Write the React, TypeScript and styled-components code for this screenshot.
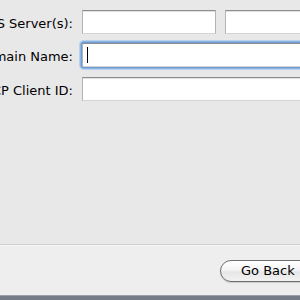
import React from "react";
import styled, { createGlobalStyle } from "styled-components";

const Global = createGlobalStyle`
  html, body { margin: 0; padding: 0; }
  body {
    width: 300px; height: 300px; overflow: hidden;
    background: #e8e8e8;
    font-family: "DejaVu Sans", "Liberation Sans", sans-serif;
    font-size: 13px; color: #000;
  }
`;

const Page = styled.div`
  display: flex; flex-direction: column;
  width: 300px; height: 300px; overflow: hidden;
`;

const FormArea = styled.div`
  flex: 1;
  display: flex; flex-direction: column;
  padding-top: 10px;
  gap: 9px;
  background: #e8e8e8;
`;

const Row = styled.div<{ $mt?: number }>`
  display: flex; align-items: center;
  height: 24px;
  gap: 9px;
  margin-top: ${(p) => p.$mt ?? 0}px;
`;

const Label = styled.label`
  flex: none;
  width: 140px;
  margin-left: -67px;
  text-align: right;
  white-space: nowrap;
  padding-top: 2px;
`;

const Field = styled.div<{ $w: number; $focus?: boolean }>`
  flex: none;
  box-sizing: border-box;
  width: ${(p) => p.$w}px;
  height: 24px;
  background: #fff;
  border-top: 1px solid #8e8e8e;
  border-left: 1px solid #b4b4b4;
  border-right: 1px solid #b4b4b4;
  border-bottom: 1px solid #d4d4d4;
  box-shadow: ${(p) =>
    p.$focus
      ? "0 0 0 1px #6d9bd2, 0 0 0 2px #8db6e2, 0 0 0 3px #b6d0ee"
      : "inset 0 1px 0 #e0e0e0"};
  border-radius: ${(p) => (p.$focus ? "2px" : "0")};
  display: flex; align-items: center;
  padding-left: 4px;
`;

const Caret = styled.div`
  width: 1px; height: 16px; background: #000;
`;

const Footer = styled.div`
  flex: none;
  height: 49px;
  background: #eeeeee;
  border-top: 1px solid #cfcfcf;
  box-shadow: inset 0 1px 0 #f6f6f6;
  display: flex; align-items: center; justify-content: flex-end;
  padding-top: 1px;
`;

const Button = styled.button`
  flex: none;
  box-sizing: border-box;
  margin-right: -26px;
  width: 106px;
  height: 22px;
  border-radius: 11px;
  border: 1px solid #6e6e6e;
  background: linear-gradient(#ffffff 0%, #f4f4f4 45%, #e6e6e6 55%, #f2f2f2 100%);
  box-shadow: 0 1px 1px rgba(0,0,0,0.15);
  font-family: "DejaVu Sans", "Liberation Sans", sans-serif;
  font-size: 13px; color: #000;
  text-align: left;
  padding: 0 0 0 20px;
  white-space: nowrap;
`;

const BottomBar = styled.div`
  flex: none;
  height: 4px;
  background: #767b88;
  border-top: 1px solid #9a9ea8;
`;

export default function App() {
  return (
    <Page>
      <Global />
      <FormArea>
        <Row>
          <Label>DNS Server(s):</Label>
          <Field $w={134} />
          <Field $w={134} />
        </Row>
        <Row>
          <Label>Domain Name:</Label>
          <Field $w={240} $focus>
            <Caret />
          </Field>
        </Row>
        <Row $mt={1}>
          <Label>DHCP Client ID:</Label>
          <Field $w={240} />
        </Row>
      </FormArea>
      <Footer>
        <Button>Go Back</Button>
      </Footer>
      <BottomBar />
    </Page>
  );
}
